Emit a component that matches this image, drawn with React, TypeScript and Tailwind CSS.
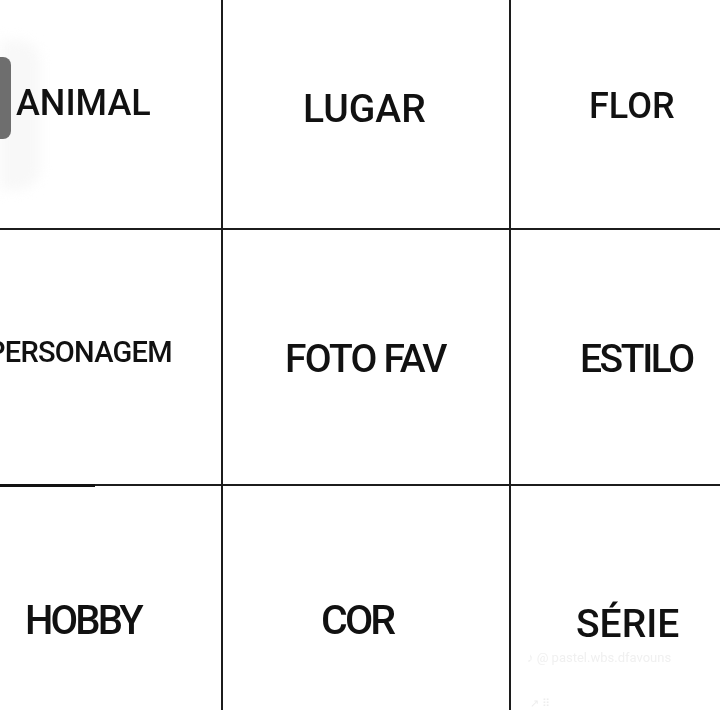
import React from "react";

type Cell = {
  label: string;
  // padding, size and tracking tuned per cell so the words sit where they do in the template
  className: string;
};

const cells: Cell[] = [
  { label: "ANIMAL", className: "pt-[85px] pl-[16px] text-[36px]" },
  { label: "LUGAR", className: "pt-[90px] pl-[80px] text-[39px]" },
  { label: "FLOR", className: "pt-[88px] pl-[78px] text-[36px]" },
  { label: "PERSONAGEM", className: "pt-[108px] -ml-[13px] text-[29px] tracking-[-0.025em]" },
  { label: "FOTO FAV", className: "pt-[110px] pl-[62px] text-[39px] tracking-[-0.045em]" },
  { label: "ESTILO", className: "pt-[110px] pl-[69px] text-[39px] tracking-[-0.062em]" },
  { label: "HOBBY", className: "pt-[115px] pl-[25px] text-[40px] tracking-[-0.07em]" },
  { label: "COR", className: "pt-[114px] pl-[98px] text-[41px] tracking-[-0.07em]" },
  { label: "SÉRIE", className: "pt-[119px] pl-[65px] text-[39px]" },
];

export default function App() {
  return (
    <div className="relative w-[720px] h-[710px] overflow-hidden bg-white font-['Roboto',sans-serif]">
      <div className="grid h-full w-full grid-cols-[221px_286px_1fr] grid-rows-[228px_254px_1fr] gap-[2px] bg-[#1c1c1c]">
        {cells.map((cell) => (
          <div key={cell.label} className="overflow-hidden bg-white">
            <p
              className={`whitespace-nowrap font-medium leading-none text-[#111] ${cell.className}`}
            >
              {cell.label}
            </p>
          </div>
        ))}
      </div>

      {/* gray tab peeking in from the left edge */}
      <div className="pointer-events-none absolute left-0 top-[40px] h-[150px] w-[40px] rounded-r-[22px] bg-[#f8f8f8] blur-[6px] mix-blend-multiply" />
      <div className="absolute left-0 top-[57px] h-[82px] w-[11px] rounded-r-[8px] bg-[#6e6e6e]" />

      {/* thicker stroke segment on the lower-left line */}
      <div className="absolute left-0 top-[484px] h-[3px] w-[95px] bg-[#111]" />

      {/* faint watermark */}
      <div className="absolute left-[527px] top-[648px] whitespace-nowrap text-[13px] text-[#f0f0f0]">
        ♪ @ pastel.wbs.dfavouns
      </div>
      <div className="absolute left-[530px] top-[696px] text-[11px] text-[#ededed]">↗ ⠿</div>
    </div>
  );
}
